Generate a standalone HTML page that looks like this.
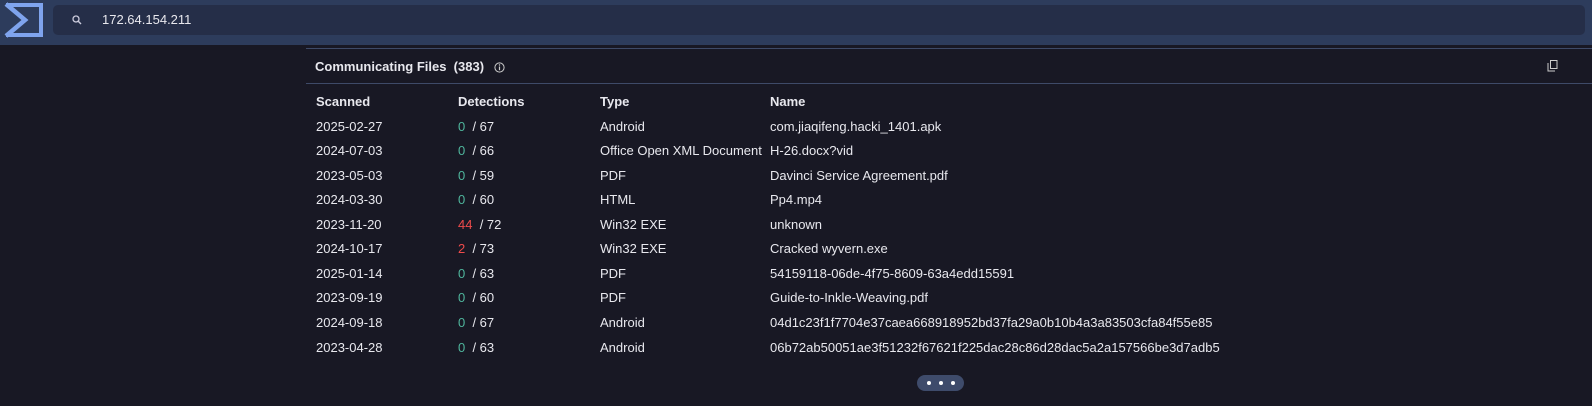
<!DOCTYPE html>
<html><head><meta charset="utf-8"><style>
*{margin:0;padding:0;box-sizing:border-box}
body{width:1592px;height:406px;background:#181824;font-family:"Liberation Sans","Noto Sans CJK JP",sans-serif;color:#e8e8ee;position:relative;overflow:hidden;font-size:13px}
.top{position:absolute;left:0;top:0;width:1592px;height:45px;background:#2d3c5c}
.search{position:absolute;left:53px;top:5px;width:1532px;height:30px;background:#252e48;border-radius:5px}
.search span{position:absolute;left:49px;top:7px;font-size:13px;color:#e8e8ee}
.panel{position:absolute;left:306px;top:48px;width:1286px;height:36px;border-top:1px solid #3e4a68;border-bottom:1px solid #3e4a68}
.title{position:absolute;left:9px;top:10px;font-weight:bold;font-size:13px}
.row{position:absolute;left:316px;height:20px;line-height:20px;white-space:nowrap}
.row span{position:absolute}
.c1{left:0}.c2{left:142px}.c3{left:284px}.c4{left:454px}
.g{color:#4fb59c}.r{color:#ef4b4b}
.hdr{font-weight:bold}
.more{position:absolute;left:917px;top:375px;width:47px;height:16px;border-radius:8px;background:#3e4b6b}
.more i{position:absolute;top:6px;width:4px;height:4px;border-radius:2px;background:#fff}
</style></head><body>
<div class="top">
<svg style="position:absolute;left:0;top:0" width="48" height="42" viewBox="0 0 48 42"><path d="M6 5H41V35H6" fill="none" stroke="#7fa4ee" stroke-width="4"/><path d="M6 4L25 20L6 36" fill="none" stroke="#7fa4ee" stroke-width="4.5"/></svg>
<div class="search">
<svg style="position:absolute;left:19px;top:10px" width="10" height="10" viewBox="0 0 10 10"><circle cx="4" cy="4" r="3" fill="none" stroke="#ccd" stroke-width="1.3"/><path d="M6 6L9 9" stroke="#ccd" stroke-width="1.4"/></svg>
<span>172.64.154.211</span></div>
</div>
<div class="panel"><div class="title">Communicating Files&nbsp; (383)&nbsp;
<svg style="vertical-align:-2px;margin-left:3px" width="11" height="11" viewBox="0 0 11 11"><circle cx="5.5" cy="5.5" r="4.6" fill="none" stroke="#ccc" stroke-width="1"/><path d="M5.5 4.5V8.2" stroke="#ccc" stroke-width="1.2"/><circle cx="5.5" cy="3" r=".7" fill="#ccc"/></svg></div>
<svg style="position:absolute;left:1241px;top:11px" width="11" height="12" viewBox="0 0 11 12"><rect x="3.5" y="0.5" width="6.5" height="8" fill="none" stroke="#ccc"/><path d="M1 3V11H8" fill="none" stroke="#ccc"/></svg>
</div>
<div class="row hdr" style="top:92px"><span class="c1">Scanned</span><span class="c2">Detections</span><span class="c3">Type</span><span class="c4">Name</span></div>
<div class="row" style="top:117px"><span class="c1">2025-02-27</span><span class="c2"><b class="g" style="font-weight:normal">0</b>&nbsp; / 67</span><span class="c3">Android</span><span class="c4">com.jiaqifeng.hacki_1401.apk</span></div>
<div class="row" style="top:141px"><span class="c1">2024-07-03</span><span class="c2"><b class="g" style="font-weight:normal">0</b>&nbsp; / 66</span><span class="c3">Office Open XML Document</span><span class="c4">H-26.docx?vid</span></div>
<div class="row" style="top:166px"><span class="c1">2023-05-03</span><span class="c2"><b class="g" style="font-weight:normal">0</b>&nbsp; / 59</span><span class="c3">PDF</span><span class="c4">Davinci Service Agreement.pdf</span></div>
<div class="row" style="top:190px"><span class="c1">2024-03-30</span><span class="c2"><b class="g" style="font-weight:normal">0</b>&nbsp; / 60</span><span class="c3">HTML</span><span class="c4">Pp4.mp4</span></div>
<div class="row" style="top:215px"><span class="c1">2023-11-20</span><span class="c2"><b class="r" style="font-weight:normal">44</b>&nbsp; / 72</span><span class="c3">Win32 EXE</span><span class="c4">unknown</span></div>
<div class="row" style="top:239px"><span class="c1">2024-10-17</span><span class="c2"><b class="r" style="font-weight:normal">2</b>&nbsp; / 73</span><span class="c3">Win32 EXE</span><span class="c4">Cracked wyvern.exe</span></div>
<div class="row" style="top:264px"><span class="c1">2025-01-14</span><span class="c2"><b class="g" style="font-weight:normal">0</b>&nbsp; / 63</span><span class="c3">PDF</span><span class="c4">54159118-06de-4f75-8609-63a4edd15591</span></div>
<div class="row" style="top:288px"><span class="c1">2023-09-19</span><span class="c2"><b class="g" style="font-weight:normal">0</b>&nbsp; / 60</span><span class="c3">PDF</span><span class="c4">Guide-to-Inkle-Weaving.pdf</span></div>
<div class="row" style="top:313px"><span class="c1">2024-09-18</span><span class="c2"><b class="g" style="font-weight:normal">0</b>&nbsp; / 67</span><span class="c3">Android</span><span class="c4">04d1c23f1f7704e37caea668918952bd37fa29a0b10b4a3a83503cfa84f55e85</span></div>
<div class="row" style="top:338px"><span class="c1">2023-04-28</span><span class="c2"><b class="g" style="font-weight:normal">0</b>&nbsp; / 63</span><span class="c3">Android</span><span class="c4">06b72ab50051ae3f51232f67621f225dac28c86d28dac5a2a157566be3d7adb5</span></div>
<div class="more"><i style="left:10px"></i><i style="left:22px"></i><i style="left:34px"></i></div>
</body></html>
